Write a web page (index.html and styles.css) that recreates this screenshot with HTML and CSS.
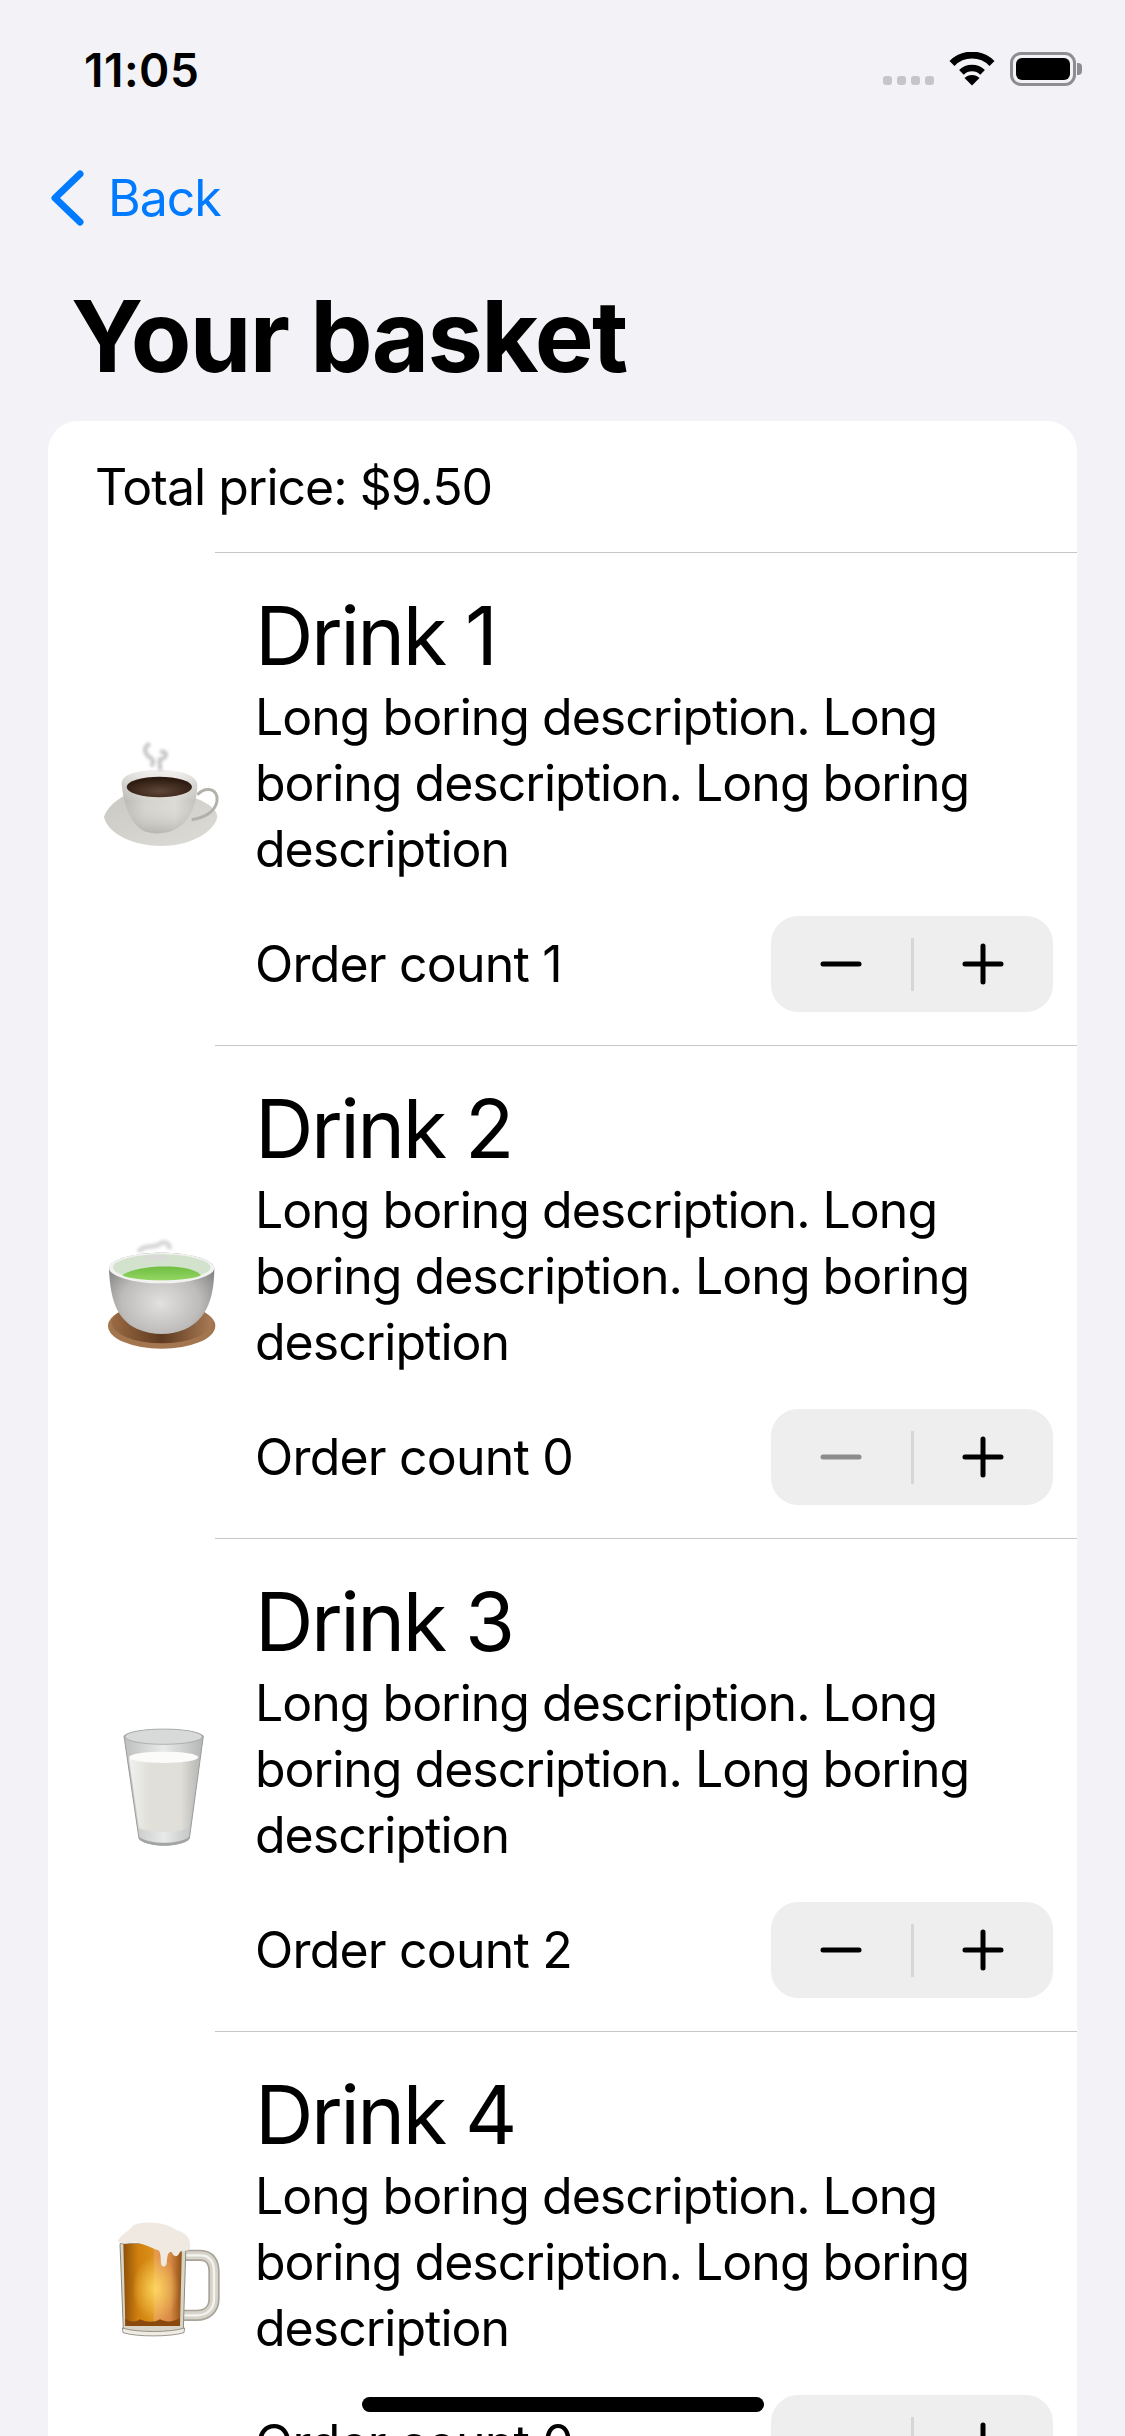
FILE: index.html
```html
<!DOCTYPE html>
<html lang="en">
<head>
<meta charset="utf-8">
<title>Your basket</title>
<link rel="stylesheet" href="styles.css">
</head>
<body>
<svg class="defs" width="0" height="0" aria-hidden="true">
  <defs>
    <filter id="blur3" x="-30%" y="-30%" width="160%" height="160%"><feGaussianBlur stdDeviation="5"/></filter>
    <filter id="blur1" x="-10%" y="-10%" width="120%" height="120%"><feGaussianBlur stdDeviation="1.5"/></filter>
    <linearGradient id="cupG" x1="0" x2="1" y1="0" y2="0"><stop offset="0" stop-color="#b9b7b2"/><stop offset=".3" stop-color="#d4d2cd"/><stop offset=".7" stop-color="#dcdad5"/><stop offset="1" stop-color="#c2c0ba"/></linearGradient>
    <linearGradient id="cupShade" x1="0" x2="0" y1="0" y2="1"><stop offset="0" stop-color="#fff" stop-opacity=".6"/><stop offset=".5" stop-color="#fff" stop-opacity="0"/><stop offset="1" stop-color="#7d7b76" stop-opacity=".35"/></linearGradient>
    <linearGradient id="saucerG" x1="0" x2="1" y1="0" y2="1"><stop offset="0" stop-color="#cbc9c3"/><stop offset="1" stop-color="#dedcd7"/></linearGradient>
    <radialGradient id="coffeeG" cx=".5" cy=".7" r=".6"><stop offset="0" stop-color="#5f4737"/><stop offset="1" stop-color="#2d1a10"/></radialGradient>
    <radialGradient id="bowlG" cx=".49" cy=".62" r=".62"><stop offset="0" stop-color="#e2e1df"/><stop offset=".6" stop-color="#bdbcba"/><stop offset="1" stop-color="#858583"/></radialGradient>
    <linearGradient id="plateG" x1="0" x2="1" y1="0" y2="0"><stop offset="0" stop-color="#9a6a43"/><stop offset=".5" stop-color="#5f3a20"/><stop offset="1" stop-color="#a87a55"/></linearGradient>
    <linearGradient id="teaG" x1="0" x2="0" y1="0" y2="1"><stop offset="0" stop-color="#6fbe42"/><stop offset="1" stop-color="#94d663"/></linearGradient>
    <linearGradient id="milkG" x1="0" x2="1" y1="0" y2="0"><stop offset="0" stop-color="#f1f1ee"/><stop offset=".3" stop-color="#e0dfd8"/><stop offset=".75" stop-color="#dfded8"/><stop offset="1" stop-color="#b9b9b6"/></linearGradient>
    <linearGradient id="glassG" x1="0" x2="1" y1="0" y2="0"><stop offset="0" stop-color="#bdbfbf"/><stop offset=".5" stop-color="#e8e9e9"/><stop offset="1" stop-color="#b4b6b6"/></linearGradient>
    <linearGradient id="beerH" x1="0" x2="1" y1="0" y2="0"><stop offset="0" stop-color="#8d4f08"/><stop offset=".25" stop-color="#d0800e"/><stop offset=".5" stop-color="#da8f18"/><stop offset=".54" stop-color="#e69c50"/><stop offset=".8" stop-color="#d98a45"/><stop offset="1" stop-color="#8d4f14"/></linearGradient>
    <radialGradient id="beerGlow" cx=".55" cy=".55" r=".4"><stop offset="0" stop-color="#ffdb62" stop-opacity=".9"/><stop offset="1" stop-color="#ffdb62" stop-opacity="0"/></radialGradient>

    <symbol id="e-coffee" viewBox="30 51 480 480">
      <path d="M72 345C80 318 108 296 130 283L350 290C382 302 412 322 412 345C402 395 322 432 245 432C160 432 84 396 72 345Z" fill="url(#saucerG)"/>
      <path d="M352 278C372 256 405 256 411 285C415 318 385 346 335 353" fill="none" stroke="#b3b1ab" stroke-width="9"/>
      <path d="M125 245C125 215 180 205 240 205C300 205 352 220 352 250C350 300 335 360 280 385C260 395 225 397 200 390C155 375 130 310 125 245Z" fill="url(#cupG)"/>
      <path d="M125 245C125 215 180 205 240 205C300 205 352 220 352 250C350 300 335 360 280 385C260 395 225 397 200 390C155 375 130 310 125 245Z" fill="url(#cupShade)"/>
      <ellipse cx="238" cy="255" rx="98" ry="31" fill="url(#coffeeG)"/>
      <path d="M210 125C190 135 190 155 215 170C225 180 215 190 212 192M240 150C265 145 262 170 240 172C235 185 245 195 238 205" fill="none" stroke="#c8c8c8" stroke-width="13" filter="url(#blur3)"/>
    </symbol>

    <symbol id="e-tea" viewBox="30 0 480 480">
      <ellipse cx="245" cy="342" rx="161" ry="68" fill="#a4764f"/>
      <ellipse cx="245" cy="332" rx="150" ry="62" fill="url(#plateG)"/>
      <path d="M87 170C87 140 170 122 245 122C320 122 403 140 403 170C402 250 385 320 315 352C270 372 215 370 170 350C105 320 90 250 87 170Z" fill="url(#bowlG)"/>
      <ellipse cx="245" cy="168" rx="158" ry="46" fill="#f2f2f0"/>
      <ellipse cx="245" cy="166" rx="146" ry="39" fill="#d3e2cd"/>
      <path d="M127 190C160 160 330 150 363 190C330 210 160 210 127 190Z" fill="url(#teaG)"/>
      <path d="M175 120C190 95 225 110 240 95C260 85 270 100 268 112M195 150C200 135 240 130 262 142" fill="none" stroke="#d9d9d9" stroke-width="15" filter="url(#blur3)"/>
    </symbol>

    <symbol id="e-milk" viewBox="0 9 480 480">
      <path d="M102 102C130 76 310 76 340 102L298 410C270 436 175 436 147 410Z" fill="url(#glassG)" stroke="#9a9c9c" stroke-width="3"/>
      <path d="M117 170C150 146 290 146 325 170L296 378C260 394 180 394 147 378Z" fill="url(#milkG)"/>
      <ellipse cx="221" cy="166" rx="104" ry="17" fill="#fbfbf9" filter="url(#blur1)"/>
      <ellipse cx="221" cy="104" rx="116" ry="23" fill="#d8d9d9" stroke="#9a9c9c" stroke-width="2"/>
      <path d="M147 404C180 428 265 428 298 404L296 414C265 436 180 436 149 414Z" fill="#a3a5a5"/>
    </symbol>

    <symbol id="e-beer" viewBox="0 -12 480 480">
      <path d="M285 160H330C360 160 372 180 372 210V290C372 322 350 340 320 340H280" fill="none" stroke="#a8a398" stroke-width="34"/>
      <path d="M285 160H330C360 160 372 180 372 210V290C372 322 350 340 320 340H280" fill="none" stroke="#d6d3cb" stroke-width="24"/>
      <path d="M285 160H330C360 160 372 180 372 210V290C372 322 350 340 320 340H280" fill="none" stroke="#f4f3ef" stroke-width="7"/>
      <path d="M90 125H288L280 382C240 402 140 402 100 382Z" fill="#d9d5c8" stroke="#8f8a7c" stroke-width="3"/>
      <path d="M100 125H276L270 372H106Z" fill="url(#beerH)"/>
      <rect x="100" y="125" width="176" height="247" fill="url(#beerGlow)"/>
      <path d="M105 350C125 362 140 360 150 352C170 362 195 362 210 352C230 362 250 360 270 348V372H106Z" fill="#8b4a0d"/>
      <path d="M97 378C140 392 240 392 284 378L282 392C240 405 140 405 99 392Z" fill="#efece4" stroke="#6e6a60" stroke-width="2"/>
      <path d="M83 118C95 95 118 88 130 70C160 55 230 60 260 85C285 90 305 110 300 140C290 150 275 145 270 150C262 168 250 165 245 150C235 150 232 155 230 185C225 198 215 195 213 185C212 165 212 150 205 145C180 135 160 125 140 122C120 120 100 132 83 118Z" fill="#efe9e2"/>
    </symbol>
  </defs>
</svg>

<main class="screen">
  <header class="status">
    <span class="time">11:05</span>
    <div class="status-icons">
      <div class="dots"><i></i><i></i><i></i><i></i></div>
      <svg class="wifi" width="46" height="34" viewBox="0 0 46 34" aria-hidden="true">
        <path d="M3 11.5A28 28 0 0 1 43 11.5" fill="none" stroke="#000" stroke-width="7"/>
        <path d="M12.400 20.400A15 15 0 0 1 33.600 20.400" fill="none" stroke="#000" stroke-width="6.500"/>
        <path d="M23 33.500L15.500 26A10.600 10.600 0 0 1 30.500 26Z" fill="#000"/>
      </svg>
      <div class="battery"><div class="battery-fill"></div></div>
      <div class="battery-nub"></div>
    </div>
  </header>

  <nav class="nav">
    <svg class="chevron" width="36" height="60" viewBox="0 0 36 60" aria-hidden="true">
      <path d="M31 6L6 30L31 54" fill="none" stroke="#007aff" stroke-width="7" stroke-linecap="round" stroke-linejoin="round"/>
    </svg>
    <span class="back">Back</span>
  </nav>

  <h1 class="title">Your basket</h1>

  <section class="card">
    <div class="total">Total price: $9.50</div>

    <div class="sep"></div>
    <article class="row">
      <div class="emoji"><svg width="160" height="160"><use href="#e-coffee"/></svg></div>
      <div class="details">
        <h2 class="name">Drink 1</h2>
        <p class="desc">Long boring description. Long boring description. Long boring description</p>
        <div class="order">
          <span>Order count 1</span>
          <div class="stepper">
            <button class="step"><svg width="44" height="44" viewBox="0 0 44 44"><path d="M4 22H40"/></svg></button>
            <span class="divider"></span>
            <button class="step"><svg width="44" height="44" viewBox="0 0 44 44"><path d="M4 22H40M22 4V40"/></svg></button>
          </div>
        </div>
      </div>
    </article>

    <div class="sep"></div>
    <article class="row">
      <div class="emoji"><svg width="160" height="160"><use href="#e-tea"/></svg></div>
      <div class="details">
        <h2 class="name">Drink 2</h2>
        <p class="desc">Long boring description. Long boring description. Long boring description</p>
        <div class="order">
          <span>Order count 0</span>
          <div class="stepper">
            <button class="step is-disabled"><svg width="44" height="44" viewBox="0 0 44 44"><path d="M4 22H40"/></svg></button>
            <span class="divider"></span>
            <button class="step"><svg width="44" height="44" viewBox="0 0 44 44"><path d="M4 22H40M22 4V40"/></svg></button>
          </div>
        </div>
      </div>
    </article>

    <div class="sep"></div>
    <article class="row">
      <div class="emoji"><svg width="160" height="160"><use href="#e-milk"/></svg></div>
      <div class="details">
        <h2 class="name">Drink 3</h2>
        <p class="desc">Long boring description. Long boring description. Long boring description</p>
        <div class="order">
          <span>Order count 2</span>
          <div class="stepper">
            <button class="step"><svg width="44" height="44" viewBox="0 0 44 44"><path d="M4 22H40"/></svg></button>
            <span class="divider"></span>
            <button class="step"><svg width="44" height="44" viewBox="0 0 44 44"><path d="M4 22H40M22 4V40"/></svg></button>
          </div>
        </div>
      </div>
    </article>

    <div class="sep"></div>
    <article class="row">
      <div class="emoji"><svg width="160" height="160"><use href="#e-beer"/></svg></div>
      <div class="details">
        <h2 class="name">Drink 4</h2>
        <p class="desc">Long boring description. Long boring description. Long boring description</p>
        <div class="order">
          <span>Order count 0</span>
          <div class="stepper">
            <button class="step is-disabled"><svg width="44" height="44" viewBox="0 0 44 44"><path d="M4 22H40"/></svg></button>
            <span class="divider"></span>
            <button class="step"><svg width="44" height="44" viewBox="0 0 44 44"><path d="M4 22H40M22 4V40"/></svg></button>
          </div>
        </div>
      </div>
    </article>
  </section>

  <div class="home-indicator"></div>
</main>
</body>
</html>
```

FILE: styles.css
```css
* { box-sizing: border-box; }

html, body {
  margin: 0;
  padding: 0;
}

body {
  width: 1125px;
  height: 2436px;
  overflow: hidden;
  background: #f2f2f7;
  color: #000;
  font-family: Inter, "Liberation Sans", sans-serif;
}

.defs { position: absolute; }

.screen {
  position: relative;
  width: 1125px;
  height: 2436px;
  overflow: hidden;
}

.status {
  height: 140px;
  padding: 44px 43px 0 84px;
  display: flex;
  justify-content: space-between;
  align-items: flex-start;
}

.time {
  font-size: 46px;
  line-height: 52px;
  font-weight: 600;
  letter-spacing: 0.5px;
}

.status-icons {
  display: flex;
  align-items: flex-end;
  height: 42px;
  margin-top: 8px;
}

.dots {
  display: flex;
  gap: 5px;
  margin-right: 15px;
  margin-bottom: 9px;
}

.dots i {
  width: 9px;
  height: 9px;
  border-radius: 3px;
  background: #c6c6c8;
}

.wifi { margin-right: 15px; margin-bottom: 8px; }

.battery {
  width: 66px;
  height: 34px;
  padding: 3px;
  border: 3px solid #8e8e92;
  border-radius: 11px;
  margin-bottom: 8px;
}

.battery-fill {
  width: 100%;
  height: 100%;
  background: #000;
  border-radius: 6px;
}

.battery-nub {
  width: 5px;
  height: 12px;
  margin: 0 0 19px 1px;
  background: #8e8e92;
  border-radius: 0 4px 4px 0;
}

.nav {
  height: 116px;
  padding-left: 49px;
  display: flex;
  align-items: center;
  color: #007aff;
}

.chevron { margin-right: 23px; }

.back {
  font-size: 50px;
  line-height: 60px;
  letter-spacing: -1px;
}

.title {
  margin: 0 0 25px;
  padding: 20px 0 0 71px;
  font-size: 99px;
  line-height: 120px;
  font-weight: 700;
  letter-spacing: -1.7px;
}

.card {
  margin: 0 48px;
  background: #fff;
  border-radius: 30px 30px 0 0;
}

.total {
  height: 131px;
  padding: 36px 0 0 47px;
  font-size: 50px;
  line-height: 60px;
  letter-spacing: -1px;
}

.sep {
  height: 1px;
  margin-left: 167px;
  background: #c6c6c8;
}

.row {
  display: flex;
  height: 492px;
}

.emoji {
  flex: none;
  width: 207px;
  padding-left: 42px;
  display: flex;
  align-items: center;
}

.details {
  flex: 1;
  min-width: 0;
  padding: 36px 24px 0 0;
}

.name {
  margin: 0;
  font-size: 81px;
  line-height: 95px;
  font-weight: 400;
  letter-spacing: -2.5px;
}

.desc {
  margin: 0;
  font-size: 50px;
  line-height: 66px;
  letter-spacing: -1px;
}

.order {
  margin-top: 34px;
  display: flex;
  justify-content: space-between;
  align-items: center;
  font-size: 50px;
  letter-spacing: -0.8px;
}

.stepper {
  width: 282px;
  height: 96px;
  display: flex;
  align-items: center;
  background: #eeeeef;
  border-radius: 27px;
}

.step {
  flex: 1;
  height: 100%;
  padding: 0;
  border: 0;
  background: none;
  display: flex;
  align-items: center;
  justify-content: center;
}

.step path {
  fill: none;
  stroke: #000;
  stroke-width: 5;
  stroke-linecap: round;
}

.step.is-disabled path { stroke: #8c8c8d; }

.divider {
  flex: none;
  width: 3px;
  height: 53px;
  background: #d6d6d7;
}

.home-indicator {
  position: absolute;
  left: 362px;
  top: 2397px;
  width: 402px;
  height: 15px;
  border-radius: 8px;
  background: #000;
}
```
